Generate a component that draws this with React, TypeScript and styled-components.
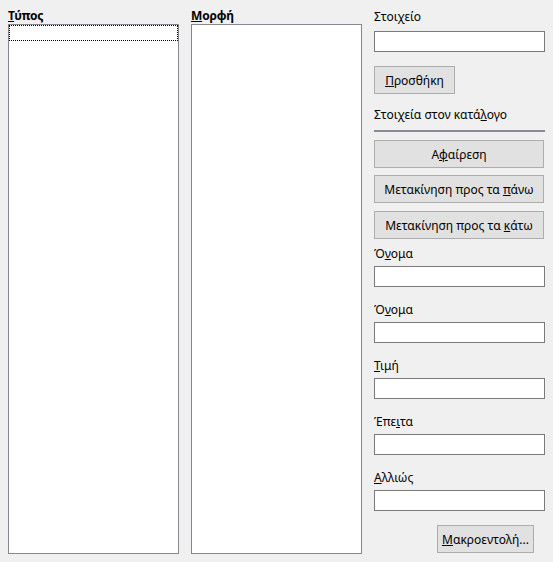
import React from "react";
import styled, { createGlobalStyle } from "styled-components";

const Global = createGlobalStyle`
  html, body { margin: 0; padding: 0; background: #f0f0f0; }
  body { font-family: "Noto Sans", "Open Sans", sans-serif; font-size: 12px; color: #000; }
`;

const Page = styled.div`
  width: 553px;
  height: 562px;
  box-sizing: border-box;
  padding: 8px 8px 0 8px;
  display: grid;
  grid-template-columns: 171px 171px 171px;
  column-gap: 12px;
  background: #f0f0f0;
`;

const ListColumn = styled.div`
  display: flex;
  flex-direction: column;
`;

const ListTitle = styled.div`
  font-weight: bold;
  height: 16px;
  line-height: 16px;
  font-size: 12px;
  letter-spacing: -0.2px;
`;

const ListBox = styled.div`
  box-sizing: border-box;
  width: 171px;
  height: 530px;
  background: #fff;
  border: 1px solid #828790;
  padding: 0;
`;

const FocusRow = styled.div`
  height: 16px;
  border: 1px dotted #000;
  box-sizing: border-box;
`;

const Side = styled.div`
  display: flex;
  flex-direction: column;
  align-items: stretch;
`;

const Label = styled.div<{ $top?: number }>`
  margin-top: ${(p) => p.$top ?? 0}px;
  height: 16px;
  line-height: 16px;
  white-space: nowrap;
`;

const Input = styled.div<{ $top?: number }>`
  margin-top: ${(p) => p.$top ?? 0}px;
  box-sizing: border-box;
  height: 21px;
  background: #fff;
  border: 1px solid #7a7a7a;
`;

const Button = styled.div<{ $top?: number; $width?: number; $right?: number }>`
  margin-top: ${(p) => p.$top ?? 0}px;
  margin-right: ${(p) => p.$right ?? 0}px;
  box-sizing: border-box;
  height: 28px;
  width: ${(p) => (p.$width ? `${p.$width}px` : "auto")};
  align-self: ${(p) => (p.$right ? "flex-end" : "flex-start")};
  background: #e1e1e1;
  border: 1px solid #adadad;
  display: flex;
  align-items: center;
  justify-content: center;
  white-space: nowrap;
  color: #000;
`;

const Separator = styled.div`
  margin-top: 7px;
  height: 2px;
  background: #878c96;
`;

const U = styled.span`
  text-decoration: underline;
`;

export default function App() {
  return (
    <>
      <Global />
      <Page>
        <ListColumn>
          <ListTitle>
            <U>Τ</U>ύπος
          </ListTitle>
          <ListBox>
            <FocusRow />
          </ListBox>
        </ListColumn>
        <ListColumn>
          <ListTitle>
            <U>Μ</U>ορφή
          </ListTitle>
          <ListBox />
        </ListColumn>
        <Side>
          <Label $top={1}>Στοιχείο</Label>
          <Input $top={6} />
          <Button $top={14} $width={81}>
            <span>
              <U>Π</U>ροσθήκη
            </span>
          </Button>
          <Label $top={13}>
            Στοιχεία στον κατά<U>λ</U>ογο
          </Label>
          <Separator />
          <Button $top={8} $width={170}>
            <span>
              Α<U>φ</U>αίρεση
            </span>
          </Button>
          <Button $top={7} $width={170}>
            <span>
              Μετακίνηση προς τα <U>π</U>άνω
            </span>
          </Button>
          <Button $top={8} $width={170}>
            <span>
              Μετακίνηση προς τα <U>κ</U>άτω
            </span>
          </Button>
          <Label $top={7}>
            Ό<U>ν</U>ομα
          </Label>
          <Input $top={4} />
          <Label $top={15}>
            Ό<U>ν</U>ομα
          </Label>
          <Input $top={4} />
          <Label $top={15}>
            <U>Τ</U>ιμή
          </Label>
          <Input $top={4} />
          <Label $top={15}>
            Έπε<U>ι</U>τα
          </Label>
          <Input $top={4} />
          <Label $top={15}>
            <U>Α</U>λλιώς
          </Label>
          <Input $top={4} />
          <Button $top={14} $width={97} $right={11}>
            <span>
              <U>Μ</U>ακροεντολή...
            </span>
          </Button>
        </Side>
      </Page>
    </>
  );
}
